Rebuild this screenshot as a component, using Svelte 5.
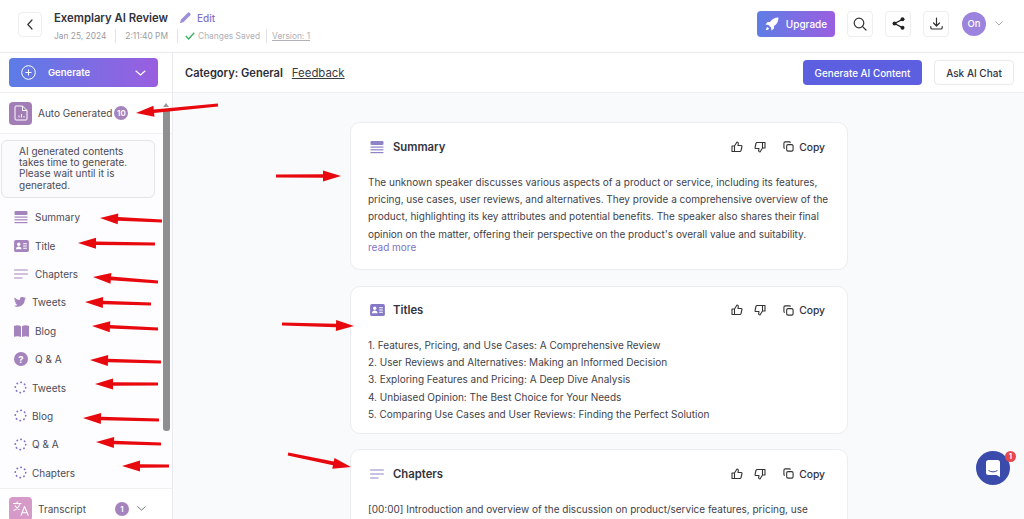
<script>
  const arrows = [
    [136,113,218,105],[100,218,162,221],[78,243,155,244],[93,277,158,282],[85,302,151,304],
    [92,326,158,329],[90,360,161,362],[95,384,158,384],[83,418,159,420],[96,442,161,444],
    [122,466,169,466],[341,176,276,176],[354,326,282,324],[351,467,288,454]
  ];
  function arrowPoints([tx,ty,ex,ey]) {
    const dx = ex-tx, dy = ey-ty, len = Math.hypot(dx,dy), ux = dx/len, uy = dy/len, nx = -uy, ny = ux;
    const h = 18, w = 5.5;
    const bx = tx+ux*h, by = ty+uy*h;
    return `${tx},${ty} ${bx+nx*w},${by+ny*w} ${bx+nx*1.8},${by+ny*1.8} ${ex+nx*1.5},${ey+ny*1.5} ${ex-nx*1.5},${ey-ny*1.5} ${bx-nx*1.8},${by-ny*1.8} ${bx-nx*w},${by-ny*w}`;
  }
  const navItems = [
    {icon:'summary',label:'Summary'},{icon:'title',label:'Title'},{icon:'chapters',label:'Chapters'},
    {icon:'tweet',label:'Tweets',narrow:true},{icon:'blog',label:'Blog'},{icon:'qa',label:'Q & A'},
    {icon:'spin',label:'Tweets',narrow:true},{icon:'spin',label:'Blog',narrow:true},{icon:'spin',label:'Q & A',narrow:true},{icon:'spin',label:'Chapters',narrow:true}
  ];
  const titles = [
    '1. Features, Pricing, and Use Cases: A Comprehensive Review',
    '2. User Reviews and Alternatives: Making an Informed Decision',
    '3. Exploring Features and Pricing: A Deep Dive Analysis',
    '4. Unbiased Opinion: The Best Choice for Your Needs',
    '5. Comparing Use Cases and User Reviews: Finding the Perfect Solution'
  ];
</script>

{#snippet icon(name, color)}
  {#if name === 'summary'}
    <svg width="14" height="14" viewBox="0 0 14 14" fill={color}><rect x="0.5" y="1" width="13" height="4" rx="1"/><rect x="0.5" y="6.5" width="13" height="1.2"/><rect x="0.5" y="9.2" width="13" height="1.2"/><rect x="0.5" y="12" width="13" height="1.2"/></svg>
  {:else if name === 'title'}
    <svg width="15" height="12" viewBox="0 0 16 13"><rect width="16" height="13" rx="2" fill={color}/><circle cx="5" cy="4.6" r="1.8" fill="#fff"/><path d="M2 10c0-2 1.3-3 3-3s3 1 3 3z" fill="#fff"/><path d="M9.8 4h4M9.8 6.5h4M9.8 9h4" stroke="#fff" stroke-width="1.1"/></svg>
  {:else if name === 'chapters'}
    <svg width="14" height="10" viewBox="0 0 14 10" fill="none" stroke={color} stroke-width="1.1" stroke-linecap="round"><path d="M.6 1h12.8M.6 5h12.8M.6 9h7.5"/></svg>
  {:else if name === 'tweet'}
    <svg width="12" height="10" viewBox="0 0 24 20" fill={color}><path d="M24 2.4a10 10 0 0 1-2.8.8A5 5 0 0 0 23.3.5a10 10 0 0 1-3.1 1.2 4.9 4.9 0 0 0-8.4 4.5A14 14 0 0 1 1.7.9a4.9 4.9 0 0 0 1.5 6.6 5 5 0 0 1-2.2-.6 4.9 4.9 0 0 0 3.9 4.9 5 5 0 0 1-2.2.1 4.9 4.9 0 0 0 4.6 3.4A9.900 9.900 0 0 1 0 17.300 14 14 0 0 0 21.500 4.900 10 10 0 0 0 24 2.400z"/></svg>
  {:else if name === 'blog'}
    <svg width="15" height="12" viewBox="0 0 15 12" fill={color}><path d="M0 1c2.500-1 5-1 7 .3V12c-2-1-4.500-1-7-.3zM15 1c-2.500-1-5-1-7 .3V12c2-1 4.500-1 7-.3z"/></svg>
  {:else if name === 'qa'}
    <span class="qa" style:background={color}>?</span>
  {:else if name === 'spin'}
    <svg width="13" height="13" viewBox="0 0 13 13" fill="none"><circle cx="6.500" cy="6.500" r="5.200" stroke="#7d72c8" stroke-width="1.700" stroke-linecap="round" stroke-dasharray="0.3 3.750"/></svg>
  {/if}
{/snippet}

{#snippet cardTools()}
  <div class="tools">
    <svg width="12" height="12" viewBox="0 0 24 24" fill="none" stroke="#333" stroke-width="2.200" stroke-linejoin="round"><path d="M7 10v11H2V10zM7 10l5-8c2 0 3 1.500 2.500 3.500L14 9h6.500c1 0 1.700 1 1.400 2l-2 8.500c-.2 1-1 1.500-2 1.500H7"/></svg>
    <svg width="12" height="12" viewBox="0 0 24 24" fill="none" stroke="#333" stroke-width="2.200" stroke-linejoin="round"><path d="M17 14V3h5v11zM17 14l-5 8c-2 0-3-1.500-2.500-3.500L10 15H3.500c-1 0-1.700-1-1.400-2l2-8.500C4.300 3.500 5 3 6 3h11"/></svg>
    <button class="copy">
      <svg width="11" height="11" viewBox="0 0 24 24" fill="none" stroke="#333" stroke-width="2.400"><rect x="8" y="8" width="14" height="14" rx="3"/><path d="M4 16c-1.500 0-2-1-2-2V5c0-2 1-3 3-3h9c1 0 2 .5 2 2"/></svg>
      Copy
    </button>
  </div>
{/snippet}

<div class="page">
  <header class="top">
    <button class="sq back" aria-label="Back">
      <svg width="8" height="11" viewBox="0 0 8 11" fill="none" stroke="#333" stroke-width="1.200" stroke-linecap="round" stroke-linejoin="round"><path d="M6 1 1.800 5.500 6 10"/></svg>
    </button>
    <div class="headtext">
      <div class="titleline">
        <span class="doc">Exemplary AI Review</span>
        <span class="edit">
          <svg width="11" height="11" viewBox="0 0 11 11" fill="#9d8fd8"><path d="M0 11l.8-3.300L7.800.7a1.200 1.200 0 0 1 1.700 0l.8.8a1.200 1.200 0 0 1 0 1.700L3.300 10.200z"/></svg>
          Edit
        </span>
      </div>
      <div class="meta">
        <span class="m1">Jan 25, 2024</span>
        <span class="m2">2:11:40 PM</span>
        <span class="m3">
          <svg width="10" height="8" viewBox="0 0 10 8" fill="none" stroke="#35b35a" stroke-width="1.300"><path d="M.8 4 3.600 7 9.200.8"/></svg>
          Changes Saved
        </span>
        <span class="ver">Version: 1</span>
      </div>
    </div>
    <div class="actions">
      <button class="upgrade">
        <svg width="14" height="14" viewBox="0 0 14 14" fill="#fff"><path d="M13.500.5c-4 0-6.500 1.500-8.500 4.500H2.500L.5 7.500l3 .5 2.500 2.500.5 3L9 11.500V9c3-2 4.500-4.500 4.500-8.500z"/><path d="M2.500 10c-1 .5-1.500 1.700-1.500 3 1.300 0 2.500-.5 3-1.500z"/></svg>
        Upgrade
      </button>
      <button class="sq" aria-label="Search">
        <svg width="14" height="14" viewBox="0 0 14 14" fill="none" stroke="#333" stroke-width="1.200" stroke-linecap="round"><circle cx="6" cy="6" r="4.800"/><path d="m9.600 9.600 3.400 3.400"/></svg>
      </button>
      <button class="sq" aria-label="Share">
        <svg width="13" height="13" viewBox="0 0 13 13" fill="#222"><circle cx="2.500" cy="6.500" r="2"/><circle cx="10.500" cy="2.300" r="2"/><circle cx="10.500" cy="10.700" r="2"/><path d="M2.500 6.500 10.500 2.300M2.500 6.500l8 4.200" stroke="#222" stroke-width="1.300"/></svg>
      </button>
      <button class="sq" aria-label="Download">
        <svg width="13" height="13" viewBox="0 0 13 13" fill="none" stroke="#333" stroke-width="1.200" stroke-linecap="round" stroke-linejoin="round"><path d="M6.500 1v7.500M3.500 6l3 3 3-3M.8 9.500v1.200c0 .8.500 1.300 1.300 1.300h8.800c.8 0 1.300-.5 1.300-1.300V9.500"/></svg>
      </button>
      <span class="avatar">On</span>
      <svg class="avchev" width="8" height="5" viewBox="0 0 8 5" fill="none" stroke="#aaa" stroke-width="1"><path d="m.5.5 3.500 3.500L7.500.5"/></svg>
    </div>
  </header>

  <div class="body">
    <aside class="side">
      <div class="genwrap">
        <button class="generate">
          <svg width="15" height="15" viewBox="0 0 15 15" fill="none" stroke="#fff" stroke-width="1"><circle cx="7.500" cy="7.500" r="6.800"/><path d="M7.500 4.500v6M4.500 7.500h6"/></svg>
          <span>Generate</span>
          <svg class="genchev" width="11" height="6" viewBox="0 0 11 6" fill="none" stroke="#fff" stroke-width="1.200"><path d="m.7.700 4.800 4.300L10.300.7"/></svg>
        </button>
      </div>
      <div class="group">
        <span class="tile">
          <svg width="14" height="16" viewBox="0 0 14 16" fill="none" stroke="#fff" stroke-width="1"><path d="M1 2a1 1 0 0 1 1-1h6.500L13 5.500V14a1 1 0 0 1-1 1H2a1 1 0 0 1-1-1z"/><path d="M8.500 1v4.500H13M5 12.500v-2M7.500 12.500v-3.500M10 12.500v-1.500"/></svg>
        </span>
        <span class="grouplabel">Auto Generated</span>
        <span class="count">10</span>
      </div>
      <div class="scrollarea">
        <div class="note">AI generated contents takes time to generate. Please wait until it is generated.</div>
        <ul class="nav">
          {#each navItems as item}
            <li class:narrow={item.narrow}>
              <span class="navicon">{@render icon(item.icon, '#a583bd')}</span>
              <span>{item.label}</span>
            </li>
          {/each}
        </ul>
      </div>
      <div class="group transcript">
        <span class="tile pink">
          <svg width="18" height="17" viewBox="0 0 18 17" fill="none" stroke="#fff" stroke-width="1.100" stroke-linejoin="round"><path d="M1 3.500h8.500M5.200 1.500v2M8 3.500C7 7 4.500 9.500 1.500 10.500M3 5.500c1 2 2.500 3.500 4.500 4.300M9 15.500l3.500-9 3.800 9M10.200 12.800h5"/></svg>
        </span>
        <span class="grouplabel">Transcript</span>
        <span class="count one">1</span>
        <svg class="tchev" width="9" height="5" viewBox="0 0 9 5" fill="none" stroke="#777" stroke-width="1"><path d="m.5.500 4 3.700 4-3.700"/></svg>
      </div>
      <div class="scrollbar"></div>
      <span class="scrollup"></span>
    </aside>

    <main class="main">
      <div class="subbar">
        <strong>Category: General</strong>
        <a class="fb" href="#fb">Feedback</a>
        <div class="subactions">
          <button class="primary">Generate AI Content</button>
          <button class="ghost">Ask AI Chat</button>
        </div>
      </div>
      <div class="cards">
        <section class="card">
          <div class="cardhead">
            <span class="ci">{@render icon('summary', '#8f84c8')}</span>
            <h2>Summary</h2>
            {@render cardTools()}
          </div>
          <p>The unknown speaker discusses various aspects of a product or service, including its features, pricing, use cases, user reviews, and alternatives. They provide a comprehensive overview of the product, highlighting its key attributes and potential benefits. The speaker also shares their final opinion on the matter, offering their perspective on the product's overall value and suitability.</p>
          <a class="more" href="#more">read more</a>
        </section>
        <section class="card">
          <div class="cardhead">
            <span class="ci">{@render icon('title', '#8479c6')}</span>
            <h2>Titles</h2>
            {@render cardTools()}
          </div>
          <div class="list">
            {#each titles as t}<div>{t}</div>{/each}
          </div>
        </section>
        <section class="card">
          <div class="cardhead">
            <span class="ci">{@render icon('chapters', '#8f84c8')}</span>
            <h2>Chapters</h2>
            {@render cardTools()}
          </div>
          <p>[00:00] Introduction and overview of the discussion on product/service features, pricing, use cases, user reviews, and alternatives.</p>
        </section>
      </div>
    </main>
  </div>

  <button class="chat" aria-label="Chat">
    <svg width="14" height="17" viewBox="0 0 14 17" fill="#fff"><path d="M2.500 0h9A2.500 2.500 0 0 1 14 2.500V17l-3.500-2h-8A2.500 2.500 0 0 1 0 12.500v-10A2.500 2.500 0 0 1 2.500 0z"/><path d="M2.500 10.500c2.800 1.800 6.200 1.800 9 0" fill="none" stroke="#3b4bab" stroke-width="1"/></svg>
    <span class="badge">1</span>
  </button>

  <svg class="annot" width="1024" height="519" viewBox="0 0 1024 519" aria-hidden="true">
    {#each arrows as a}<polygon points={arrowPoints(a)} fill="#e8090f"/>{/each}
  </svg>
</div>

<style>
  :global(body) { margin: 0; }
  * { box-sizing: border-box; }
  .page { position: relative; width: 1024px; height: 519px; overflow: hidden; background: #fff; font-family: Inter, "Liberation Sans", sans-serif; color: #2f2f3a; }
  button { font-family: inherit; cursor: pointer; }
  .top { height: 53px; display: flex; align-items: center; padding: 0 24px 5px 18px; border-bottom: 1px solid #e9e9ee; }
  .sq { width: 26px; height: 26px; background: #fff; border: 1px solid #eeeef1; border-radius: 4px; padding: 0; display: flex; align-items: center; justify-content: center; }
  .back { width: 24px; height: 25px; margin-top: 2px; }
  .headtext { margin-left: 12px; display: flex; flex-direction: column; gap: 3px; padding-top: 5px; }
  .titleline { display: flex; align-items: center; gap: 12px; height: 16px; }
  .doc { font-size: 11.3px; font-weight: 600; color: #33333d; }
  .edit { display: flex; align-items: center; gap: 6px; font-size: 10px; color: #7f74c7; font-weight: 500; }
  .meta { display: flex; align-items: center; font-size: 8.400px; color: #9b9ba3; height: 14px; }
  .meta > span { display: flex; align-items: center; height: 14px; }
  .m1 { padding-right: 9px; border-right: 1px solid #e3e3e6; }
  .m2 { padding: 0 9px; border-right: 1px solid #e3e3e6; }
  .m3 { padding: 0 6px 0 7px; gap: 3px; border-right: 1px solid #e3e3e6; color: #b0b0b6; }
  .ver { padding-left: 5px; text-decoration: underline; color: #b0b0b6; }
  .actions { margin-left: auto; margin-right: -3px; display: flex; align-items: center; gap: 12px; }
  .upgrade { width: 78px; height: 26px; border: 0; border-radius: 4px; background: linear-gradient(90deg, #5f7de6, #9a5fe0); color: #fff; font-size: 10px; font-weight: 500; display: flex; align-items: center; justify-content: center; gap: 7px; padding: 0; }
  .avatar { width: 24px; height: 24px; border-radius: 50%; background: #9b83de; color: #fff; font-size: 9.500px; font-weight: 500; display: flex; align-items: center; justify-content: center; margin-left: 1px; }
  .avchev { margin-left: -3px; }
  .body { display: flex; height: 466px; }
  .side { position: relative; width: 173px; flex: none; border-right: 1px solid #e9e9ee; background: #fff; display: flex; flex-direction: column; }
  .genwrap { height: 40px; flex: none; padding: 5px 14px 0 9px; border-bottom: 1px solid #eeeef1; }
  .generate { width: 149px; height: 29px; border: 0; border-radius: 4px; background: linear-gradient(90deg, #5c7ce6, #9a5ee0); color: #fff; font-size: 9.500px; font-weight: 600; display: flex; align-items: center; padding: 0 12px; gap: 12px; }
  .genchev { margin-left: auto; }
  .group { height: 41px; flex: none; display: flex; align-items: center; padding: 0 0 0 9px; border-bottom: 1px solid #f0eff3; font-size: 10px; color: #4a4a55; }
  .tile { width: 23px; height: 23px; border-radius: 4px; background: #a37db5; display: flex; align-items: center; justify-content: center; margin-right: 6px; }
  .tile.pink { width: 23px; height: 24px; background: #d69ac8; }
  .count { width: 14px; height: 14px; border-radius: 50%; background: #a583bd; color: #fff; font-size: 8px; font-weight: 600; display: flex; align-items: center; justify-content: center; margin-left: 2px; }
  .scrollarea { flex: none; height: 354px; background: #fdfcfe; padding: 6px 0 0 1px; overflow: hidden; }
  .note { width: 154px; height: 58px; border: 1px solid #e4e3e8; border-radius: 6px; background: #fbfafc; padding: 5px 12px 0 17px; font-size: 10px; line-height: 11.200px; color: #4b4b57; }
  .nav { list-style: none; margin: 5px 0 0; padding: 0; }
  .nav li { height: 28.4px; display: flex; align-items: center; padding-left: 13px; font-size: 10px; color: #4b4b57; }
  .navicon { width: 21px; display: flex; align-items: center; flex: none; }
  .nav li.narrow .navicon { width: 18px; }
  .qa { width: 14px; height: 14px; border-radius: 50%; color: #fff; font-size: 9.500px; font-weight: 700; display: flex; align-items: center; justify-content: center; }
  .transcript { height: 40px; border-top: 1px solid #f0eff3; border-bottom: 0; }
  .count.one { margin-left: 29px; }
  .tchev { margin-left: 8px; }
  .scrollbar { position: absolute; left: 163px; top: 57px; width: 7px; height: 321px; background: #8f8f92; border-radius: 0 0 3px 3px; }
  .scrollup { position: absolute; left: 163px; top: 50px; width: 0; height: 0; border: 3.500px solid transparent; border-top: 0; border-bottom: 4px solid #999; }
  .main { flex: 1; min-width: 0; background: #f9fafc; display: flex; flex-direction: column; }
  .subbar { height: 40px; flex: none; background: #fff; border-bottom: 1px solid #eeeef1; display: flex; align-items: center; padding: 0 10px 0 12px; font-size: 11.1px; color: #2c2c35; }
  .subbar strong { font-weight: 600; }
  .fb { margin-left: 9px; color: #3a3a44; text-decoration: underline; font-size: 11.400px; }
  .subactions { margin-left: auto; display: flex; gap: 12px; }
  .primary { width: 119px; height: 25px; border: 0; border-radius: 4px; background: #5c5fe0; color: #fff; font-size: 9.900px; font-weight: 500; padding: 0; }
  .ghost { width: 80px; height: 25px; border: 1px solid #eaeaee; border-radius: 4px; background: #fff; color: #33333d; font-size: 10px; font-weight: 500; padding: 0; }
  .cards { padding: 29px 0 0 177px; display: flex; flex-direction: column; gap: 15.500px; }
  .card { width: 498px; flex: none; background: #fff; border: 1px solid #ecedf1; border-radius: 10px; padding: 0 17px; }
  .card:nth-child(1) { height: 148px; }
  .card:nth-child(2) { height: 148px; }
  .card:nth-child(3) { height: 100px; }
  .cardhead { height: 47px; display: flex; align-items: center; }
  .ci { width: 25px; padding-left: 1.500px; display: flex; align-items: center; }
  h2 { margin: 0; font-size: 11.300px; font-weight: 600; color: #33333d; }
  .tools { margin-left: auto; display: flex; align-items: center; gap: 11px; padding-right: 5px; }
  .copy { border: 0; background: none; padding: 0; margin-left: 6px; display: flex; align-items: center; gap: 5px; font-size: 10.3px; font-weight: 500; color: #33333d; }
  p { margin: 4px 0 0; font-size: 10px; line-height: 17.200px; color: #3f3f4a; }
  .more { display: block; font-size: 10px; line-height: 10px; color: #7f74c7; text-decoration: none; margin-top: -1px; }
  .list { margin-top: 3.500px; font-size: 10px; line-height: 17.200px; color: #3f3f4a; }
  .chat { position: absolute; left: 976px; top: 451px; width: 34px; height: 34px; border-radius: 50%; background: #3b4bab; border: 0; padding: 0; display: flex; align-items: center; justify-content: center; }
  .badge { position: absolute; left: 29px; top: 0; width: 11px; height: 11px; border-radius: 50%; background: #e5484d; color: #fff; font-size: 7px; font-weight: 700; display: flex; align-items: center; justify-content: center; }
  .annot { position: absolute; inset: 0; pointer-events: none; }
</style>
